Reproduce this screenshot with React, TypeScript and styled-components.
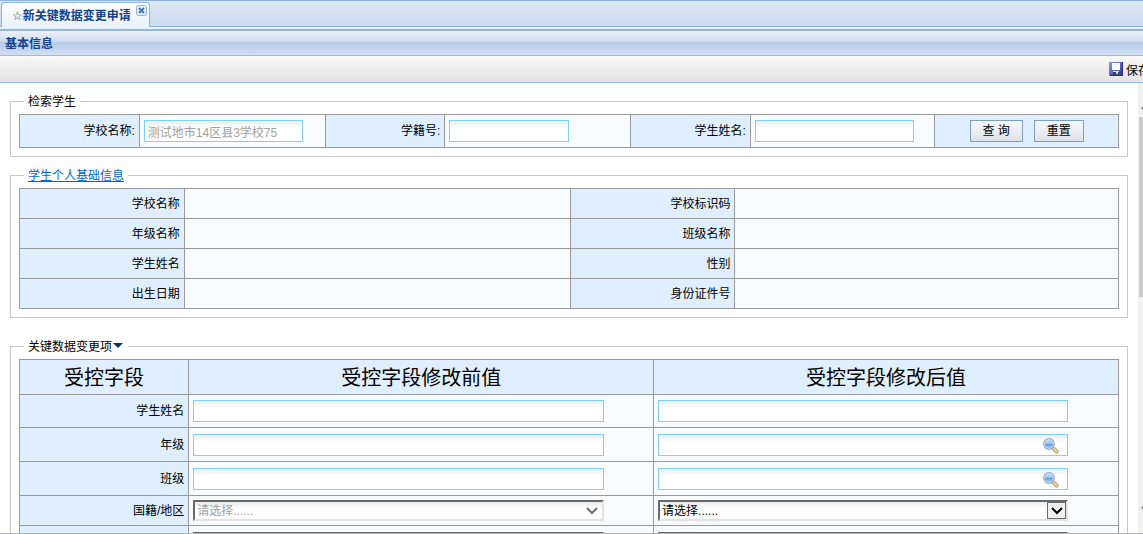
import React from "react";
import styled, { createGlobalStyle } from "styled-components";

const sans = `"Liberation Sans", "Noto Sans CJK SC", sans-serif`;

const GlobalStyle = createGlobalStyle`
  * { box-sizing: border-box; }
  html, body { margin: 0; padding: 0; overflow: hidden; background: #fff; }
  body, button, input, select { font-family: ${sans}; font-size: 12px; }
`;

/* The frame is slightly wider than the window, so its right edge runs off screen. */
const Frame = styled.div`
  display: flex;
  flex-direction: column;
  width: calc(100% + 12px);
  height: 100vh;
  border-bottom: 1px solid #99bbe8;
  color: #000;
  line-height: 16px;
`;

const TabBar = styled.nav`
  display: flex;
  align-items: flex-end;
  height: 27px;
  padding-left: 1px;
  border-top: 1px solid #8db2e3;
  border-bottom: 1px solid #8db2e3;
  background: linear-gradient(#dde7f5, #cbdaef);
`;

const Tab = styled.div`
  display: flex;
  height: 25px;
  margin-bottom: -1px;
  padding: 4px 2px 0 10px;
  border: 1px solid #8db2e3;
  border-bottom: 0;
  border-radius: 4px 4px 0 0;
  background: linear-gradient(#fff, #e9f1fa);
`;

const TabLink = styled.a`
  color: #15428b;
  font-weight: bold;
  text-decoration: none;
  white-space: nowrap;
  line-height: 18px;
`;

const Star = styled.span`
  font-family: "DejaVu Sans", sans-serif;
  font-size: 12px;
`;

const TabClose = styled.button`
  width: 11px;
  height: 11px;
  margin: -2px 0 0 5px;
  padding: 0;
  border: 0;
  background: none;
  svg { display: block; }
`;

const TabSpacer = styled.div`
  flex: none;
  height: 4px;
  border-bottom: 2px solid #8fb4e6;
  background: #e9f1fa;
`;

const PanelTitle = styled.h1`
  flex: none;
  height: 25px;
  margin: 0;
  padding-left: 5px;
  border-bottom: 1px solid #99bbe8;
  background: linear-gradient(#edf3fb, #cddaef 45%, #b5cbea 46%, #d2dff2);
  color: #15428b;
  font-size: 12px;
  line-height: 26px;
`;

const Toolbar = styled.div`
  display: flex;
  flex: none;
  align-items: center;
  justify-content: flex-end;
  height: 27px;
  padding-right: 5px;
  border-bottom: 1px solid #99bbe8;
  background: linear-gradient(#f9f9f9, #e3e3e3);
`;

const ToolButton = styled.button`
  display: flex;
  align-items: center;
  gap: 3px;
  padding: 0;
  border: 0;
  background: none;
  color: #000;
`;

const Body = styled.div`
  display: flex;
  flex: 1;
  min-height: 0;
`;

const Content = styled.main`
  flex: 1;
  min-width: 0;
  padding: 11px 10px 0;
  overflow: hidden;
`;

const ScrollTrack = styled.div`
  display: flex;
  flex: none;
  flex-direction: column;
  align-items: center;
  gap: 7px;
  width: 17px;
  padding: 19px 0;
  background: #f0f0f0;
  svg { flex: none; }
`;

const ScrollThumb = styled.div`
  width: 15px;
  height: 180px;
  margin-bottom: auto;
  background: #cdcdcd;
`;

const Group = styled.fieldset<{ $gap: number }>`
  min-width: 0;
  margin: 0 0 ${(p) => p.$gap}px;
  padding: 6px 8px 8px;
  border: 1px solid #c8c8c8;
`;

const Legend = styled.legend`
  height: 14px;
  margin-left: 5px;
  padding: 0 4px;
  line-height: 16px;
  a { color: #0066cc; }
`;

const Caret = styled.span`
  display: inline-block;
  margin: 0 1px 3px 1px;
  border: 5px solid transparent;
  border-top-color: #003366;
  border-bottom: 0;
`;

const Grid = styled.table`
  width: 100%;
  border-collapse: collapse;
  table-layout: fixed;
`;

const Col = styled.col<{ $w?: string }>`
  width: ${(p) => p.$w ?? "auto"};
`;

const Row = styled.tr<{ $h: number }>`
  height: ${(p) => p.$h}px;
`;

const LabelCell = styled.th`
  padding: 0 4px;
  border: 1px solid #999;
  background: #e0efff;
  font-weight: normal;
  text-align: right;
`;

const HeadCell = styled(LabelCell)`
  padding-top: 2px;
  font-size: 20px;
  line-height: 24px;
  text-align: center;
`;

const ValueCell = styled.td`
  padding: 0 4px;
  border: 1px solid #999;
  background: #f8fcfe;
`;

const ActionCell = styled.td`
  padding: 0;
  border: 1px solid #999;
  background: #e0efff;
`;

const Actions = styled.div`
  display: flex;
  justify-content: center;
  gap: 11px;
`;

const Button = styled.button`
  height: 22px;
  padding: 0 12px;
  border: 1px solid #7b9ebd;
  background: linear-gradient(#f6f7f9, #dfe3ea);
  color: #000;
  line-height: 20px;
  white-space: pre;
`;

const TextBox = styled.input<{ $w: string }>`
  display: block;
  width: ${(p) => p.$w};
  height: 22px;
  padding: 0 3px;
  border: 1px solid #7fd0fb;
  border-radius: 0;
  outline: 0;
  background: linear-gradient(#ececec, #fff 7px);
  color: #000;
  &:disabled { color: #a0a0a0; }
`;

const Field = styled.div`
  position: relative;
  width: 90%;
`;

const LookupButton = styled.button`
  position: absolute;
  top: 4px;
  right: 9px;
  width: 16px;
  height: 16px;
  padding: 0;
  border: 0;
  background: none;
  svg { display: block; }
`;

const Select = styled.select`
  display: block;
  width: 100%;
  height: 21px;
  padding: 0 2px;
  border: 2px solid;
  border-color: #696969 #e3e3e3 #e3e3e3 #696969;
  border-radius: 0;
  appearance: none;
  background: linear-gradient(#ececec, #fff 7px);
  color: #000;
  line-height: 16px;
  &:disabled { color: #a0a0a0; opacity: 1; }
`;

const Arrow = styled.span<{ $boxed: boolean }>`
  position: absolute;
  top: 2px;
  right: 2px;
  display: flex;
  align-items: center;
  justify-content: center;
  width: 19px;
  height: 17px;
  border: ${(p) => (p.$boxed ? "1px solid #696969" : "0")};
  background: ${(p) => (p.$boxed ? "#f0f0f0" : "none")};
  pointer-events: none;
`;

const Chevron = ({ color, up }: { color: string; up?: boolean }) => (
  <svg width="12" height="8" viewBox="0 0 12 8" aria-hidden="true">
    <path d={up ? "M1 7l5-5 5 5" : "M1 1l5 5 5-5"} fill="none" stroke={color} strokeWidth="2" />
  </svg>
);

const CloseIcon = () => (
  <svg width="11" height="11" viewBox="0 0 11 11" aria-hidden="true">
    <rect x=".5" y=".5" width="10" height="10" rx="2" fill="#e4effb" stroke="#8db2e3" />
    <path d="M3 3l5 5M8 3L3 8" stroke="#4a76ac" strokeWidth="2" />
  </svg>
);

const SaveIcon = () => (
  <svg width="14" height="14" viewBox="0 0 14 14" aria-hidden="true">
    <defs>
      <linearGradient id="disk" x1="0" y1="0" x2="1" y2="1">
        <stop offset="0" stopColor="#8c9ce8" />
        <stop offset="1" stopColor="#2a2a96" />
      </linearGradient>
    </defs>
    <path d="M0 0h14v14H1l-1-1z" fill="url(#disk)" />
    <path d="M13.500 0v13.500H1" fill="none" stroke="#2b2b8c" />
    <path d="M3 1h8v7H3z" fill="#fff" />
    <path d="M3 8h8v1H3z" fill="#5560c0" />
    <path d="M4 9h6v4H4z" fill="#35405a" />
    <path d="M4 9h6v1H4zM7 10h2v2H7z" fill="#d5dce8" />
  </svg>
);

const LookupIcon = () => (
  <svg width="16" height="16" viewBox="0 0 16 16" aria-hidden="true">
    <defs>
      <linearGradient id="lens" x1="0" y1="0" x2="0" y2="1">
        <stop offset="0" stopColor="#c3daf0" />
        <stop offset=".45" stopColor="#9cc3e8" />
        <stop offset=".5" stopColor="#5a98d8" />
        <stop offset="1" stopColor="#a4d0f4" />
      </linearGradient>
    </defs>
    <path d="M9 9l2 2" stroke="#8c99a8" strokeWidth="2" />
    <path d="M11 11l2.600 2.600" stroke="#c39a5c" strokeWidth="4" strokeLinecap="round" />
    <path d="M11 11l2.600 2.600" stroke="#f0d3a4" strokeWidth="2" strokeLinecap="round" />
    <circle cx="6" cy="6" r="5.300" fill="#e3eef8" stroke="#8fa9c6" strokeWidth="1.200" />
    <circle cx="6" cy="6" r="4" fill="url(#lens)" />
  </svg>
);

const infoRows = [
  ["学校名称", "学校标识码"],
  ["年级名称", "班级名称"],
  ["学生姓名", "性别"],
  ["出生日期", "身份证件号"],
];

const changeRows = [
  { label: "学生姓名", h: 33, lookup: false },
  { label: "年级", h: 34, lookup: true },
  { label: "班级", h: 34, lookup: true },
];

const selectRows = [
  { id: "nation", label: "国籍/地区", h: 30 },
  { id: "idtype", label: "身份证件类型", h: 34 },
];

function Choice({ label, disabled = false }: { label: string; disabled?: boolean }) {
  return (
    <Field>
      <Select aria-label={label} disabled={disabled}>
        <option>请选择......</option>
      </Select>
      <Arrow $boxed={!disabled}>
        <Chevron color={disabled ? "#6d6d6d" : "#000"} />
      </Arrow>
    </Field>
  );
}

export default function App() {
  return (
    <>
      <GlobalStyle />
      <Frame>
        <TabBar>
          <Tab>
            <TabLink href="#form"><Star>☆</Star>新关键数据变更申请</TabLink>
            <TabClose aria-label="关闭"><CloseIcon /></TabClose>
          </Tab>
        </TabBar>
        <TabSpacer />
        <PanelTitle>基本信息</PanelTitle>
        <Toolbar>
          <ToolButton><SaveIcon />保存</ToolButton>
        </Toolbar>
        <Body>
          <Content id="form">
            <Group $gap={11}>
              <Legend>检索学生</Legend>
              <Grid>
                <colgroup>
                  <Col $w="10.9%" /><Col $w="16.9%" />
                  <Col $w="10.9%" /><Col $w="16.9%" />
                  <Col $w="10.9%" /><Col $w="16.8%" />
                  <Col />
                </colgroup>
                <tbody>
                  <Row $h={33}>
                    <LabelCell><label htmlFor="school">学校名称:</label></LabelCell>
                    <ValueCell><TextBox id="school" $w="159px" defaultValue="测试地市14区县3学校75" disabled /></ValueCell>
                    <LabelCell><label htmlFor="code">学籍号:</label></LabelCell>
                    <ValueCell><TextBox id="code" $w="120px" /></ValueCell>
                    <LabelCell><label htmlFor="name">学生姓名:</label></LabelCell>
                    <ValueCell><TextBox id="name" $w="159px" /></ValueCell>
                    <ActionCell>
                      <Actions>
                        <Button>查 询</Button>
                        <Button>重置</Button>
                      </Actions>
                    </ActionCell>
                  </Row>
                </tbody>
              </Grid>
            </Group>

            <Group $gap={21}>
              <Legend><a href="#info">学生个人基础信息</a></Legend>
              <Grid id="info">
                <colgroup>
                  <Col $w="15%" /><Col $w="35.1%" /><Col $w="15%" /><Col />
                </colgroup>
                <tbody>
                  {infoRows.map(([left, right]) => (
                    <Row $h={30} key={left}>
                      <LabelCell scope="row">{left}</LabelCell>
                      <ValueCell />
                      <LabelCell scope="row">{right}</LabelCell>
                      <ValueCell />
                    </Row>
                  ))}
                </tbody>
              </Grid>
            </Group>

            <Group $gap={11}>
              <Legend>关键数据变更项<Caret /></Legend>
              <Grid>
                <colgroup>
                  <Col $w="15.4%" /><Col /><Col />
                </colgroup>
                <thead>
                  <Row $h={35}>
                    <HeadCell scope="col">受控字段</HeadCell>
                    <HeadCell scope="col">受控字段修改前值</HeadCell>
                    <HeadCell scope="col">受控字段修改后值</HeadCell>
                  </Row>
                </thead>
                <tbody>
                  {changeRows.map(({ label, h, lookup }) => (
                    <Row $h={h} key={label}>
                      <LabelCell scope="row">{label}</LabelCell>
                      <ValueCell>
                        <Field><TextBox aria-label={`${label}修改前`} $w="100%" disabled /></Field>
                      </ValueCell>
                      <ValueCell>
                        <Field>
                          <TextBox aria-label={`${label}修改后`} $w="100%" />
                          {lookup && <LookupButton aria-label={`查找${label}`}><LookupIcon /></LookupButton>}
                        </Field>
                      </ValueCell>
                    </Row>
                  ))}
                  {selectRows.map(({ id, label, h }) => (
                    <Row $h={h} key={id}>
                      <LabelCell scope="row">{label}</LabelCell>
                      <ValueCell><Choice label={`${label}修改前`} disabled /></ValueCell>
                      <ValueCell><Choice label={`${label}修改后`} /></ValueCell>
                    </Row>
                  ))}
                </tbody>
              </Grid>
            </Group>
          </Content>
          <ScrollTrack aria-hidden="true">
            <Chevron color="#606060" up />
            <ScrollThumb />
            <Chevron color="#606060" />
          </ScrollTrack>
        </Body>
      </Frame>
    </>
  );
}
